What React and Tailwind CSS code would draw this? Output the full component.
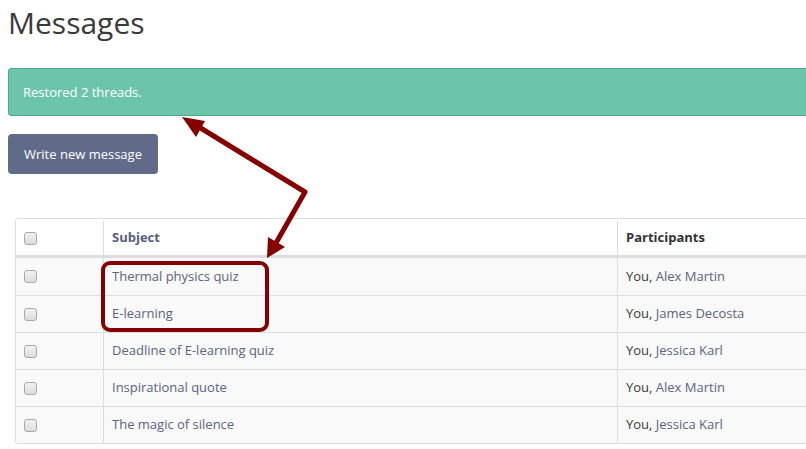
import React from "react"

const threads = [
  { subject: "Thermal physics quiz",       who: "Alex Martin" },
  { subject: "E-learning",                 who: "James Decosta" },
  { subject: "Deadline of E-learning quiz", who: "Jessica Karl" },
  { subject: "Inspirational quote",        who: "Alex Martin" },
  { subject: "The magic of silence",       who: "Jessica Karl" },
]

function Box() {
  return <span className="block w-[13px] h-[13px] rounded-[3px] border border-[#a9a9a9] bg-gradient-to-b from-[#f2f2f2] to-[#dcdcdc]" />
}

export default function App() {
  return (
    <div className="relative w-[806px] h-[449px] overflow-hidden bg-white text-[13px] text-[#3a3a3a] font-['Open_Sans',sans-serif]">
      <div className="w-[1100px] pl-[8px]">
        <h1 className="mt-[6px] text-[30px] leading-[33px] font-normal text-[#3a3a3a]">Messages</h1>

        {/* alert */}
        <div className="mt-[29px] h-[48px] flex items-center pt-[1px] px-[14px] rounded-[3px] border border-[#4aaa8b] bg-[#6cc4ab] text-white">
          Restored 2 threads.
        </div>

        <button className="mt-[18px] h-[40px] w-[150px] pt-[1px] rounded-[4px] bg-[#5f6b89] text-white text-[13px]">
          Write new message
        </button>

        <div className="mt-[44px] ml-[7px] border border-[#ddd] rounded-[3px] overflow-hidden">
          <div className="flex h-[39px] pt-[2px] border-b-[3px] border-[#ddd] bg-white font-bold">
            <div className="w-[88px] flex items-center pl-[8px] border-r border-[#ddd]"><Box /></div>
            <div className="w-[514px] flex items-center pl-[8px] border-r border-[#ddd] text-[#56607e]">Subject</div>
            <div className="flex-1 flex items-center pl-[8px] text-[#333]">Participants</div>
          </div>
          {threads.map((t, i) => (
            <div key={i} className={`flex h-[37px] ${i > 0 ? "border-t border-[#ddd]" : ""} bg-[#f9f9f9]`}>
              <div className="w-[88px] flex items-center pl-[8px] border-r border-[#ddd]"><Box /></div>
              <div className="w-[514px] flex items-center pl-[8px] border-r border-[#ddd] text-[#5a6483]">{t.subject}</div>
              <div className="flex-1 flex items-center pl-[8px]">
                You,&nbsp;<span className="text-[#5a6483]">{t.who}</span>
              </div>
            </div>
          ))}
        </div>
      </div>

      {/* annotation overlay */}
      <svg className="absolute inset-0 pointer-events-none" width="806" height="449" viewBox="0 0 806 449">
        <polyline points="199,127 305,192 276,243" fill="none" stroke="#870000" strokeWidth="5" strokeLinejoin="round" />
        <polygon points="182,117 205,121 196,137" fill="#870000" />
        <polygon points="267,258 268,237 285,247" fill="#870000" />
        <rect x="103" y="263" width="164" height="67" rx="7" fill="none" stroke="#870000" strokeWidth="4" />
      </svg>
    </div>
  )
}
